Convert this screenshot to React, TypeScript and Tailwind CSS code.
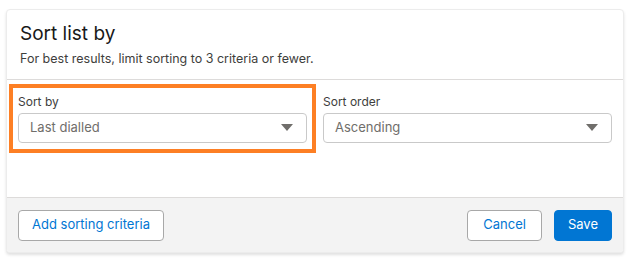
const Caret = () => (
  <svg width="12" height="8" viewBox="0 0 12 8" className="shrink-0">
    <path d="M0 0 H12 L6 7 Z" fill="#706e6b" />
  </svg>
);

interface SelectProps {
  label: string;
  value: string;
}
const SelectField = (props: SelectProps) => {
  return (
    <div className="flex flex-col">
      <label className="text-[12px] leading-4 text-[#3e3e3c] mb-[3px]">{props.label}</label>
      <div className="h-[30px] rounded-[4px] border border-[#c9c9c9] bg-white flex items-center justify-between pl-[11px] pr-[13px]">
        <span className="text-[13px] text-[#706e6b]">{props.value}</span>
        <Caret />
      </div>
    </div>
  );
};

export default function App() {
  return (
    <div className="w-[629px] h-[258px] bg-white pt-[9px] pl-[6px] pr-[5px]" style={{ fontFamily: "Inter, 'Noto Sans', sans-serif" }}>
      <div className="rounded-[4px] border border-[#ececec] shadow-[0_2px_3px_rgba(0,0,0,0.12)] overflow-hidden bg-white">
        <div className="px-[13px] pt-[11px] pb-[12px] border-b border-[#dddbda]">
          <h2 className="text-[19px] leading-[26px] text-[#181818]">Sort list by</h2>
          <p className="text-[12.5px] leading-4 mt-[4px] text-[#3e3e3c]">For best results, limit sorting to 3 criteria or fewer.</p>
        </div>
        <div className="grid grid-cols-2 items-start gap-4 px-[11px] pt-[14px] h-[117px]">
          <div className="relative">
            <div className="absolute -left-[9px] -right-[9px] -top-[10px] -bottom-[10px] border-[4px] border-[#fd7f24] pointer-events-none" />
            <SelectField label="Sort by" value="Last dialled" />
          </div>
          <SelectField label="Sort order" value="Ascending" />
        </div>
        <div className="bg-[#f3f3f3] border-t border-[#dddbda] h-[55px] px-[11px] flex items-center justify-between">
          <button className="h-[31px] px-[13px] rounded-[4px] border border-[#a8a8a8] bg-white text-[13px] text-[#0176d3]">
            Add sorting criteria
          </button>
          <div className="flex gap-3">
            <button className="h-[31px] px-[15px] rounded-[4px] border border-[#a8a8a8] bg-white text-[13px] text-[#0176d3]">
              Cancel
            </button>
            <button className="h-[31px] px-[13px] rounded-[4px] border border-[#0176d3] bg-[#0176d3] text-[13px] text-white">
              Save
            </button>
          </div>
        </div>
      </div>
    </div>
  );
}
